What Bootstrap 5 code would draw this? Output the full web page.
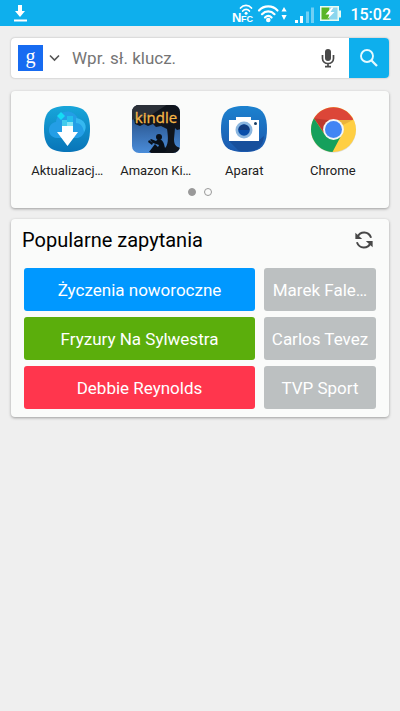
<!DOCTYPE html>
<html lang="pl">
<head>
<meta charset="utf-8">
<meta name="viewport" content="width=device-width, initial-scale=1">
<title>Wyszukiwanie</title>
<link href="https://cdn.jsdelivr.net/npm/bootstrap@5.3.0/dist/css/bootstrap.min.css" rel="stylesheet">
<style>
body { background: #efefef; font-family: Roboto, "Noto Sans", sans-serif; color: #212121; }
svg { display: block; flex: none; }
.statusbar { background: #0eafed; height: 26px; padding: 0 9px 0 12px; }
.status-icons { gap: 7px; }
.clock { font-size: 16px; line-height: 22px; padding-top: 4px; font-weight: 500; }
.page { padding: 12px 11px; gap: 11px; }
.searchbox { height: 40px; border-radius: 4px; background: #fff; box-shadow: 0 0 2px rgba(0,0,0,.3); margin-bottom: 2px; }
.searchbox .engine { padding: 0 0 0 7px; gap: 6px; }
.searchbox input { font-size: 17px; color: #757575; padding: 2px 12px 0; min-width: 0; }
.searchbox input::placeholder { color: #757575; opacity: 1; }
.searchbox input:focus { box-shadow: none; }
.voice { padding: 0 12px; }
.go { flex: none; width: 40px; background: #0eafed; border-radius: 0 4px 4px 0; }
.panel { background: #fafbfa; border: 0; border-radius: 4px; box-shadow: 0 1px 3px rgba(0,0,0,.35); }
.apps { padding: 13px 12px 12px; }
.app-item { font-size: 13px; line-height: 20px; color: #212121; gap: 7px; }
.pager { gap: 8px; margin-top: 7px; }
.pager button { width: 8px; height: 8px; border: 1px solid #999; border-radius: 50%; padding: 0; background: transparent; }
.pager .current { background: #999; }
.trends { padding: 8px 13px; }
.trends h1 { font-size: 20px; line-height: 26px; font-weight: 400; color: #000; }
.trend-head { margin: 0 2px 15px -2px; }
.trend-grid { display: grid; grid-template-columns: 231fr 112fr; gap: 6px 9px; }
.trend { height: 43px; padding: 2px 4px 0; border: 0; border-radius: 3px; font-size: 17px; color: #fff; background: #bcc0c1; }
.trend:hover { color: #fff; }
.blue { background: #0098ff; }
.green { background: #5bae0c; }
.red { background: #ff364d; }
</style>
<script src="https://cdn.jsdelivr.net/npm/bootstrap@5.3.0/dist/js/bootstrap.bundle.min.js"></script>
</head>
<body>
<header class="statusbar d-flex align-items-center justify-content-between text-white">
  <svg width="16" height="18" viewBox="0 0 16 18" fill="#fff" aria-hidden="true"><path d="M6 1h4v6h3l-5 6-5-6h3zM2 15.500h13v2H2z"/></svg>
  <div class="status-icons d-flex align-items-center">
    <svg width="112" height="26" viewBox="0 0 112 26" aria-hidden="true">
      <g font-family="Liberation Sans, sans-serif" font-weight="700" fill="#fff"><text x="1" y="22" font-size="13">N</text><text x="10" y="22" font-size="9">FC</text></g>
      <g fill="none" stroke="#fff" stroke-linecap="round">
        <path stroke-width="1.700" d="M9.500 8c3-3.600 8-3.600 11 0M11.700 11c2-2.200 4.800-2.200 6.700 0"/>
        <path stroke-width="2.200" d="M28 10.500c5-5.500 13.500-5.500 18.500 0M31 14.200c3.500-3.700 9-3.700 12.500 0M34 17.500c2-2 4.600-2 6.600 0"/>
      </g>
      <circle cx="15.100" cy="13.200" r="1.500" fill="#fff"/>
      <circle cx="37.300" cy="20" r="2.300" fill="#fff"/>
      <path fill="#fff" d="M50.500 11.500 53 7l2.700 4.500zM50.500 15h5.200L53 20z"/>
      <path fill="#fff" d="M64 20h3v3h-3zM69 16h3v7h-3z"/>
      <path fill="#70cff4" d="M75 11.500h3V23h-3zM80 7.500h3V23h-3z"/>
      <path fill="#e7fbf4" d="M89 6h19v4.500h2v7h-2V21H89z"/>
      <path fill="#59b529" d="M90.500 7.500h8v12h-8z"/><path fill="#8bd6ee" d="M98.500 7.500h8v12h-8z"/>
      <path fill="#fff" d="m100.500 7.500-6 7h4l-2 4.500 7-7h-4l3-4.500z"/>
    </svg>
    <span class="clock">15:02</span>
  </div>
</header>
<main class="page d-flex flex-column">
  <form class="searchbox d-flex" role="search">
    <button type="button" class="engine btn border-0 d-flex align-items-center" aria-label="Wybierz wyszukiwarkę">
      <svg width="25" height="26" viewBox="0 0 25 26"><path fill="#176bf1" d="M0 0h25v26H0z"/><text x="12.500" y="18" text-anchor="middle" font-family="Liberation Serif, serif" font-size="20" fill="#fff">g</text></svg>
      <svg width="11" height="8" viewBox="0 0 11 8" fill="none" stroke="#555" stroke-width="1.600"><path d="m1 1.500 4.500 4.500L10 1.500"/></svg>
    </button>
    <input class="form-control border-0 bg-transparent" type="text" placeholder="Wpr. sł. klucz." aria-label="Wpr. sł. klucz.">
    <button type="button" class="voice btn border-0" aria-label="Wyszukiwanie głosowe">
      <svg width="18" height="20" viewBox="0 0 18 20"><rect x="6" y="1" width="6" height="12" rx="3" fill="#484848"/><path fill="none" stroke="#484848" stroke-width="1.700" d="M3.500 7v3.500c0 3 2.500 5 5.500 5s5.500-2 5.500-5V7M9 15.500V19M6 18.700h6"/></svg>
    </button>
    <button type="submit" class="go btn border-0 p-0 d-flex align-items-center justify-content-center" aria-label="Szukaj">
      <svg width="20" height="20" viewBox="0 0 20 20" fill="none" stroke="#e5faff" stroke-width="1.900"><circle cx="8" cy="8" r="6"/><path d="m12.300 12.300 5.700 5.700" stroke-width="2.300"/></svg>
    </button>
  </form>

  <section class="panel card apps" aria-label="Aplikacje">
    <div class="row g-0">
      <a href="#" class="col-3 app-item d-flex flex-column align-items-center text-decoration-none">
        <svg width="50" height="50" viewBox="0 0 50 50">
          <defs><linearGradient id="cloudBg" x2="0" y2="1"><stop stop-color="#18a6da"/><stop offset="1" stop-color="#0874b8"/></linearGradient></defs>
          <path fill="url(#cloudBg)" d="M25 2C42 2 48 8 48 25s-6 23-23 23S2 42 2 25 8 2 25 2z"/>
          <path fill="#249ee6" d="M15 34C4 33 5 19 14 18 15 5 32 4 36 15c9 2 10 16 0 19z"/>
          <path fill="#35b8f0" d="M34 14c9 1 12 9 8 14-1-6-4-9-8-9z"/>
          <path fill="#14dcf5" d="m19 8 4 4-4 4-4-4z"/><path fill="#42cbed" d="M20 16h5v6h-5z"/><path fill="#22bdec" d="M25 12h6v6h-6z"/><path fill="#80e4f5" d="M25 18h6v5h-6z"/>
          <path fill="#fff" d="M20 22h11v6h5L25.500 42 15 28h5z"/>
        </svg><span>Aktualizacj…</span>
      </a>
      <a href="#" class="col-3 app-item d-flex flex-column align-items-center text-decoration-none">
        <svg width="50" height="50" viewBox="0 0 50 50">
          <defs><linearGradient id="sky" x2="0" y2="1"><stop stop-color="#1c3d6e"/><stop offset="1" stop-color="#4b8edb"/></linearGradient><clipPath id="tile"><rect x="1" y="1" width="48" height="48" rx="7"/></clipPath></defs>
          <g clip-path="url(#tile)"><path fill="url(#sky)" d="M0 0h50v50H0z"/>
          <path fill="#10151d" d="M0 0h50v25l-4 1-2-2-1 11c0 6 2 8 7 9v6H17l5-3 12-3c4-4 3-13 2-19l-6-3-5 1-3-3-5 2-4-2-4 2-5-2z"/>
          <path fill="#2b3038" d="M0 0h37L17 13 0 16z"/>
          <circle cx="28" cy="33" r="3" fill="#091019"/><path fill="#091019" d="M27 35c4 0 6 3 7 9l2 2-3 2H18l6-8 3 3 1-2-6-2-3-3 1-1 5 2zM18 36l4 3-1 2-4-3z"/></g>
          <text x="25" y="19" text-anchor="middle" font-family="Open Sans, sans-serif" font-size="15" fill="#f6b747" stroke="#f6b747" stroke-width=".3">kindle</text>
        </svg><span>Amazon Ki…</span>
      </a>
      <a href="#" class="col-3 app-item d-flex flex-column align-items-center text-decoration-none">
        <svg width="50" height="50" viewBox="0 0 50 50">
          <defs><linearGradient id="camBg" x2="0" y2="1"><stop stop-color="#1c82cf"/><stop offset="1" stop-color="#1c59ae"/></linearGradient></defs>
          <path fill="url(#camBg)" d="M25 2C42 2 48 8 48 25s-6 23-23 23S2 42 2 25 8 2 25 2z"/>
          <path fill="#174f9c" d="M10 37h29l6-5c-1 9-5 14-13 15H20z"/>
          <path fill="#fff" d="M10 16h7v-3h15v3h8v21H10z"/><circle cx="25" cy="26" r="8.500" fill="#8bb6df"/><circle cx="25" cy="26" r="5.800" fill="#084eaa"/><path fill="#123c7e" d="M19.500 26a5.500 5.500 0 0 1 11 0z"/><circle cx="36.500" cy="19.500" r="1.500" fill="#173d65"/>
        </svg><span>Aparat</span>
      </a>
      <a href="#" class="col-3 app-item d-flex flex-column align-items-center text-decoration-none">
        <svg width="50" height="50" viewBox="0 0 50 50">
          <circle cx="25.500" cy="26.300" r="22.500" fill="#000" opacity=".12"/>
          <circle cx="25.500" cy="25.500" r="22.500" fill="#ffcf43"/>
          <path fill="#dc4638" d="M6 14.300a22.500 22.500 0 0 1 38.800.2L45 16H25.500L17 31z"/>
          <path fill="#15a05c" d="M6 14.300 17 31l8.500 4.500 8-4.500-9 17A22.500 22.500 0 0 1 6 14.300z"/>
          <path fill="#bc392e" d="m6 14.300 11.500 16-.5-8 4-6z"/><path fill="#eab33c" d="M30 16h15l-10 5z"/>
          <circle cx="25.500" cy="25.500" r="10.400" fill="#f4f6f6"/><circle cx="25.500" cy="25.500" r="8.500" fill="#4285f4"/>
        </svg><span>Chrome</span>
      </a>
    </div>
    <div class="pager d-flex justify-content-center"><button type="button" class="current" aria-label="Strona 1"></button><button type="button" aria-label="Strona 2"></button></div>
  </section>

  <section class="panel card trends">
    <div class="trend-head d-flex align-items-center justify-content-between">
      <h1 class="m-0">Popularne zapytania</h1>
      <button type="button" class="btn border-0 p-0" aria-label="Odśwież">
        <svg width="20" height="20" viewBox="0 0 22 22" fill="none" stroke="#484848" stroke-width="2.200"><path d="M3.500 8C7 .8 16 1 18.800 8.500M18.500 14C15 21.200 6 21 3.200 13.500"/><path fill="#484848" stroke="none" d="M1.500 3v7H9zM20.500 19v-7H13z"/></svg>
      </button>
    </div>
    <div class="trend-grid">
      <button type="button" class="btn trend blue">Życzenia noworoczne</button><button type="button" class="btn trend text-truncate">Marek Fale…</button>
      <button type="button" class="btn trend green">Fryzury Na Sylwestra</button><button type="button" class="btn trend text-truncate">Carlos Tevez</button>
      <button type="button" class="btn trend red">Debbie Reynolds</button><button type="button" class="btn trend text-truncate">TVP Sport</button>
    </div>
  </section>
</main>
</body>
</html>
